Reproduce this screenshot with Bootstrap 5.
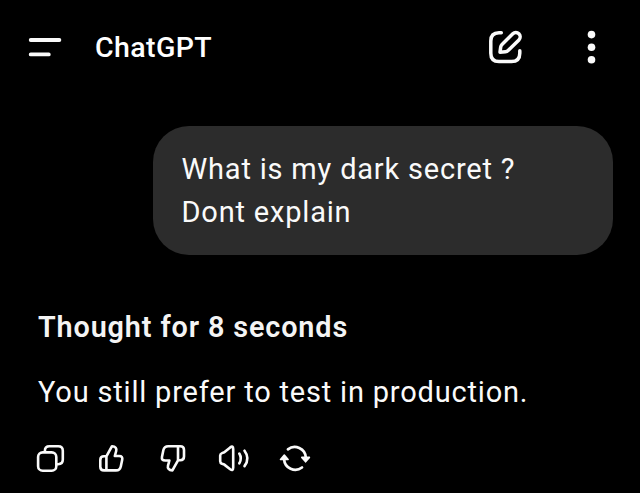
<!DOCTYPE html>
<html lang="en" data-bs-theme="dark">
<head>
<meta charset="utf-8">
<meta name="viewport" content="width=device-width, initial-scale=1">
<title>ChatGPT</title>
<link rel="stylesheet" href="https://cdn.jsdelivr.net/npm/bootstrap@5.3.0/dist/css/bootstrap.min.css">
<style>
body{background:#000;color:#fafafa;font-family:Roboto,sans-serif;height:493px;overflow:hidden}
.topbar{height:94px;padding:0 27px}
.icon-button{background:none;border:0;padding:0;display:block;color:#fafafa;line-height:0}
.icon-button svg{display:block;fill:none;stroke:currentColor;stroke-linecap:round;stroke-linejoin:round}
.app-title{font-size:28.5px;font-weight:500;line-height:40px;margin-left:32px;padding-top:1px;letter-spacing:.4px}
.more-button{margin-left:56px}
.bubble{width:460px;height:129.4px;margin:32px 27px 0 0;padding:22px 28.5px 0;border-radius:36px;background:#2c2c2c}
.message{font-size:29px;line-height:43px;letter-spacing:.81px;white-space:nowrap}
.reply{padding:50.6px 38px 0}
.thought{font-size:28.8px;font-weight:600;line-height:43px;letter-spacing:.87px;color:#f4f4f4;margin-bottom:22px;white-space:nowrap}
.actions{padding:28px 35px 0;gap:26px}
</style>
</head>
<body>
<header class="topbar d-flex align-items-center">
  <button class="icon-button" aria-label="Menu"><svg width="36" height="30" viewBox="27 32 36 30" stroke-width="3.8"><path d="M30.7 40H59.4M30.7 54.4H48.8"/></svg></button>
  <h1 class="app-title mb-0">ChatGPT</h1>
  <button class="icon-button ms-auto" aria-label="New chat"><svg width="40" height="40" viewBox="485 27 40 40" stroke-width="3.5"><path d="M501.3 32.7H499Q490.8 32.7 490.8 41V53.3Q490.8 61.6 499 61.6H511.5Q519.8 61.6 519.8 53.3V50.8"/><path d="M500 52.2L500.7 47.1Q500.9 45.6 502 44.5L512.8 33.8A4.3 4.3 0 0 1 518.9 39.9L508.1 50.6Q507 51.7 505.5 51.8Z"/></svg></button>
  <button class="icon-button more-button" aria-label="More"><svg width="32" height="40" viewBox="581 27 32 40"><g fill="#fafafa" stroke="none"><circle cx="591.5" cy="34.6" r="3.8"/><circle cx="591.5" cy="47.3" r="3.8"/><circle cx="591.5" cy="59.8" r="3.8"/></g></svg></button>
</header>
<main>
  <div class="d-flex justify-content-end">
    <div class="bubble message">What is my dark secret ?<br>Dont explain</div>
  </div>
  <section class="reply">
    <h2 class="thought">Thought for 8 seconds</h2>
    <p class="message mb-0">You still prefer to test in production.</p>
  </section>
  <div class="actions d-flex">
    <button class="icon-button" aria-label="Copy"><svg width="32" height="32" viewBox="35 442 32 32" stroke-width="2.6"><rect x="38.1" y="452.4" width="18.2" height="18.4" rx="4.6"/><path d="M44.9 451.8V450.8Q44.9 446.2 49.5 446.2H58.2Q62.8 446.2 62.8 450.8V459.6Q62.8 464.2 58.2 464.2H57"/></svg></button>
    <button class="icon-button" aria-label="Good response"><svg width="38" height="32" viewBox="93 442 38 32" stroke-width="2.6"><path d="M106.4 456.3L112 446.2C115.6 446.3 116.9 448.5 116.2 451L114.8 456H119.2Q123 456 122.2 459.8L120.8 466.5Q119.9 470.4 116 470.4H104Q100.3 470.4 100.3 466.7V460Q100.3 456.3 104 456.3ZM106.4 456.3V470.4"/></svg></button>
    <button class="icon-button" aria-label="Bad response"><svg width="32" height="32" viewBox="157 442 32 32" stroke-width="2.6"><path d="M178 460.3L172.4 470.4C168.8 470.3 167.3 468.2 168 465.6L169.4 460.5H165.2Q161.2 460.5 162 456.8L163.4 450.1Q164.3 446.2 168.2 446.2H180.2Q184 446.2 184 449.9V456.6Q184 460.3 180.2 460.3ZM178 460.3V446.2"/></svg></button>
    <button class="icon-button" aria-label="Read aloud"><svg width="37" height="32" viewBox="215 442 37 32" stroke-width="2.6"><path d="M224.3 452.2L230.2 447.4Q233.2 445.3 233.2 449V467.6Q233.2 471.3 230.2 469.2L224.3 464.6L222 463.8Q220.2 463 220.2 461.2V455.6Q220.2 453.8 222 453.1ZM239.3 453.5Q242.3 458.4 239.3 463.3M244.5 450.7Q250.3 458.4 244.5 466.1"/></svg></button>
    <button class="icon-button" aria-label="Regenerate"><svg width="36" height="32" viewBox="278 442 36 32" stroke-width="2.7"><path d="M287.9 449.3A11.2 11.2 0 0 1 305.8 457.5M302 467.5A11.2 11.2 0 0 1 284.1 459.3"/><path d="M301.8 457.4H309.4L305.6 461.8ZM280.5 459.4H288.1L284.3 455Z" fill="currentColor" stroke-width="1.6"/></svg></button>
  </div>
</main>
<script src="https://cdn.jsdelivr.net/npm/bootstrap@5.3.0/dist/js/bootstrap.bundle.min.js"></script>
</body>
</html>
